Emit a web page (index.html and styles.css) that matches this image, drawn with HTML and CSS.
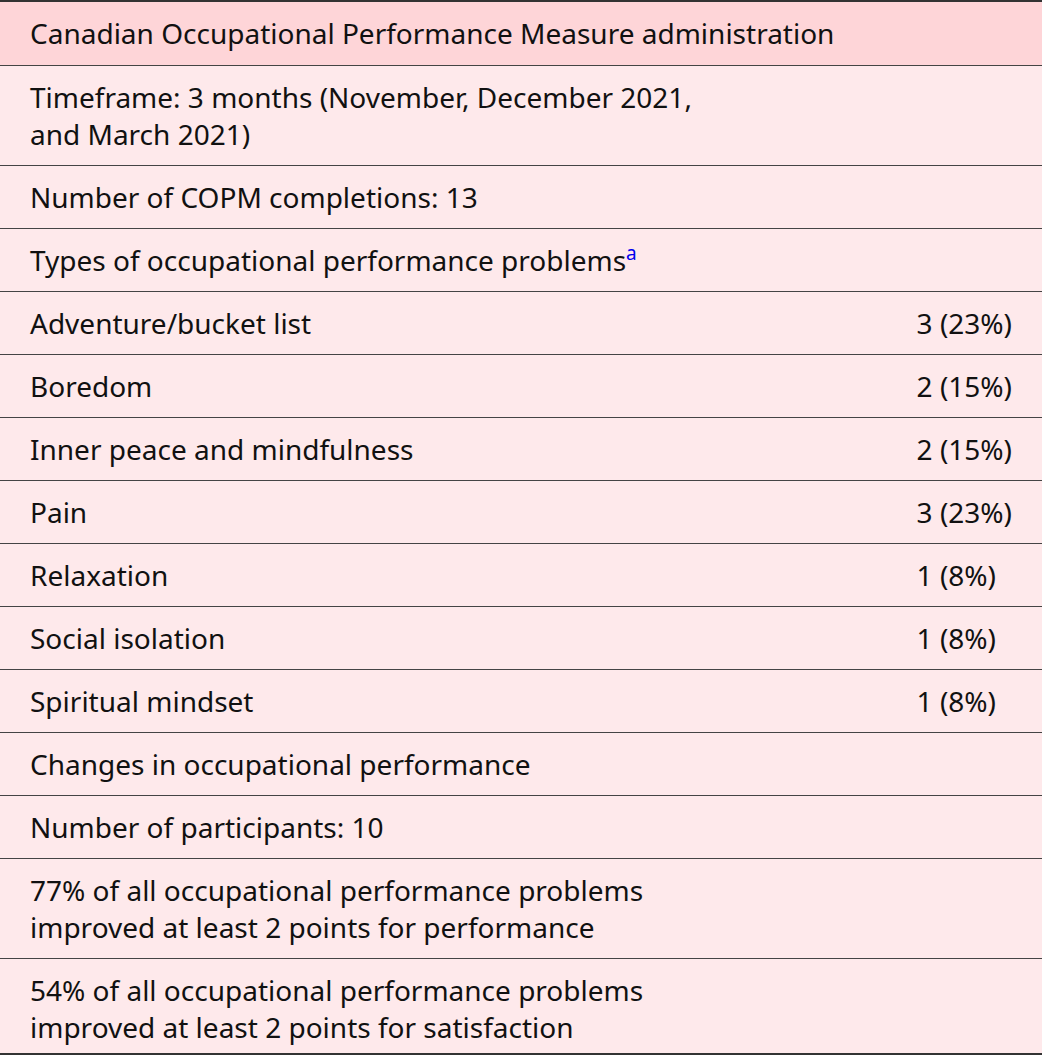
FILE: index.html
```html
<!DOCTYPE html>
<html>
<head>
<meta charset="utf-8">
<link rel="stylesheet" href="styles.css">
</head>
<body>
<table class="copm">
  <thead>
    <tr class="head"><th colspan="2">Canadian Occupational Performance Measure administration</th></tr>
  </thead>
  <tbody>
    <tr><td colspan="2"><div class="wrap">Timeframe: 3 months (November, December 2021, and March 2021)</div></td></tr>
    <tr><td colspan="2">Number of COPM completions: 13</td></tr>
    <tr><td colspan="2">Types of occupational performance problems<sup class="fn">a</sup></td></tr>
    <tr><td>Adventure/bucket list</td><td class="val">3 (23%)</td></tr>
    <tr><td>Boredom</td><td class="val">2 (15%)</td></tr>
    <tr><td>Inner peace and mindfulness</td><td class="val">2 (15%)</td></tr>
    <tr><td>Pain</td><td class="val">3 (23%)</td></tr>
    <tr><td>Relaxation</td><td class="val">1 (8%)</td></tr>
    <tr><td>Social isolation</td><td class="val">1 (8%)</td></tr>
    <tr><td>Spiritual mindset</td><td class="val">1 (8%)</td></tr>
    <tr><td colspan="2">Changes in occupational performance</td></tr>
    <tr><td colspan="2">Number of participants: 10</td></tr>
    <tr><td colspan="2"><div class="wrap">77% of all occupational performance problems improved at least 2 points for performance</div></td></tr>
    <tr class="last"><td colspan="2"><div class="wrap">54% of all occupational performance problems improved at least 2 points for satisfaction</div></td></tr>
  </tbody>
</table>
</body>
</html>
```
FILE: styles.css
```css
html, body {
  margin: 0;
  padding: 0;
  background: #ffffff;
}
.copm {
  width: 1042px;
  border-collapse: collapse;
  font-family: "Noto Sans", "Open Sans", sans-serif;
  font-size: 28px;
  line-height: 37px;
  color: #111;
  border-top: 2px solid #333;
  border-bottom: 2px solid #333;
}
.copm th, .copm td {
  text-align: left;
  font-weight: normal;
  padding: 13px 30px 12px 30px;
  border-bottom: 1px solid #444;
  background: #fee9eb;
  vertical-align: top;
}
.copm .head th {
  background: #fed5d8;
  padding-bottom: 13px;
}
.copm td.val {
  width: 1px;
  white-space: nowrap;
}
.wrap {
  max-width: 690px;
}
.fn {
  color: #0000ee;
  font-size: 19px;
  line-height: 0;
  vertical-align: 11px;
}
.copm tr.last td {
  border-bottom: none;
  padding-bottom: 7px;
}
```
